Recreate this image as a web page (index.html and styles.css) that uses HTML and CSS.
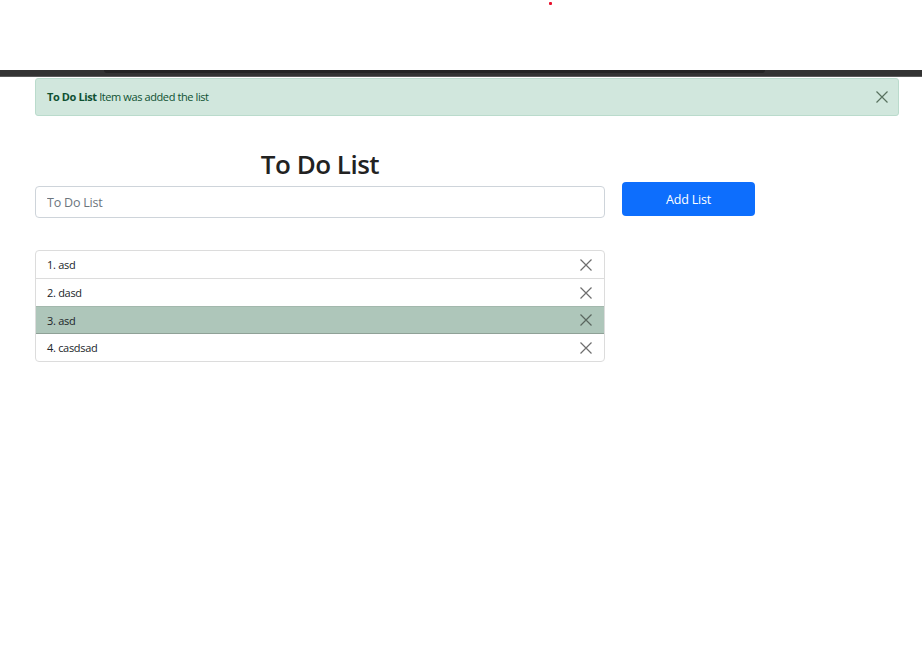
FILE: index.html
```html
<!DOCTYPE html>
<html>
<head>
<meta charset="utf-8">
<link rel="stylesheet" href="styles.css">
</head>
<body>
<div class="top">
  <div class="dot"></div>
</div>
<div class="band"><div class="band-inner"></div></div>
<div class="alert">
  <span class="alert-text"><strong>To Do List</strong> Item was added the list</span>
  <svg class="alert-close" width="12" height="12" viewBox="0 0 12 12"><path d="M0.5 0.5 L11.5 11.5 M11.5 0.5 L0.5 11.5" stroke="#58715f" stroke-width="1.2" fill="none"/></svg>
</div>
<div class="main">
  <div class="col">
    <h1 class="title">To Do List</h1>
    <input class="input" type="text" placeholder="To Do List">
    <ul class="list">
      <li class="item"><span>1. asd</span><svg class="x" width="12" height="12" viewBox="0 0 12 12"><path d="M0.5 0.5 L11.5 11.5 M11.5 0.5 L0.5 11.5" stroke="#6e6e6e" stroke-width="1.2" fill="none"/></svg></li>
      <li class="item"><span>2. dasd</span><svg class="x" width="12" height="12" viewBox="0 0 12 12"><path d="M0.5 0.5 L11.5 11.5 M11.5 0.5 L0.5 11.5" stroke="#6e6e6e" stroke-width="1.2" fill="none"/></svg></li>
      <li class="item active"><span>3. asd</span><svg class="x" width="12" height="12" viewBox="0 0 12 12"><path d="M0.5 0.5 L11.5 11.5 M11.5 0.5 L0.5 11.5" stroke="#5a665f" stroke-width="1.2" fill="none"/></svg></li>
      <li class="item last"><span>4. casdsad</span><svg class="x" width="12" height="12" viewBox="0 0 12 12"><path d="M0.5 0.5 L11.5 11.5 M11.5 0.5 L0.5 11.5" stroke="#6e6e6e" stroke-width="1.2" fill="none"/></svg></li>
    </ul>
  </div>
  <div class="side">
    <button class="btn">Add List</button>
  </div>
</div>
</body>
</html>
```
FILE: styles.css
```css
* { box-sizing: border-box; }
body {
  margin: 0;
  background: #fff;
  font-family: "Open Sans", "Noto Sans", sans-serif;
  color: #212529;
}
.top {
  height: 70px;
  padding-top: 2px;
}
.dot {
  width: 3px;
  height: 3px;
  background: #e8112d;
  border-radius: 1px;
  margin-left: 549px;
}
.band {
  height: 7px;
  background: #333333;
  border-bottom: 1px solid #5a5a5a;
  padding: 0 157px 0 104px;
}
.band-inner {
  height: 3px;
  background: #242424;
  border-radius: 0 0 3px 3px;
}
.alert {
  margin: 1px 23px 0 35px;
  height: 38px;
  background: #d1e7dd;
  border: 1px solid #badbcc;
  border-radius: 3px;
  color: #0f5132;
  display: flex;
  align-items: center;
  justify-content: space-between;
  padding: 0 10px 0 11px;
  font-size: 11px;
  letter-spacing: -0.4px;
}
.alert-text { margin-top: -2px; }
.alert-text strong { font-weight: 700; }
.main {
  display: flex;
  gap: 17px;
  margin-left: 35px;
  margin-top: 31px;
}
.col {
  width: 570px;
  display: flex;
  flex-direction: column;
}
.title {
  margin: 0 0 5px 0;
  text-align: center;
  font-size: 26px;
  font-weight: 600;
  line-height: 34px;
  letter-spacing: -0.5px;
  color: #222;
}
.input {
  height: 32px;
  border: 1px solid #ced4da;
  border-radius: 4px;
  padding: 0 11px;
  font-family: inherit;
  font-size: 12.5px;
  letter-spacing: -0.2px;
  color: #212529;
  outline: none;
}
.input::placeholder { color: #6c757d; }
.list {
  list-style: none;
  margin: 32px 0 0 0;
  padding: 0;
  border: 1px solid #dcdcdc;
  border-radius: 4px;
  overflow: hidden;
}
.item {
  height: 28px;
  display: flex;
  align-items: center;
  justify-content: space-between;
  padding: 0 12px 0 11px;
  font-size: 11px;
  letter-spacing: -0.3px;
  color: #212529;
  border-top: 1px solid #dcdcdc;
}
.item:first-child { border-top: none; height: 27px; }
.item.last { height: 27px; }
.item.active {
  background: #aec6ba;
  border-top-color: #a3b8ad;
  border-bottom: 1px solid #8fa197;
}
.item.active + .item { border-top: none; }
.side { padding-top: 35px; }
.btn {
  width: 133px;
  height: 34px;
  background: #0d6efd;
  border: none;
  border-radius: 4px;
  color: #fff;
  font-family: inherit;
  font-size: 12.5px;
  letter-spacing: -0.2px;
}
```
